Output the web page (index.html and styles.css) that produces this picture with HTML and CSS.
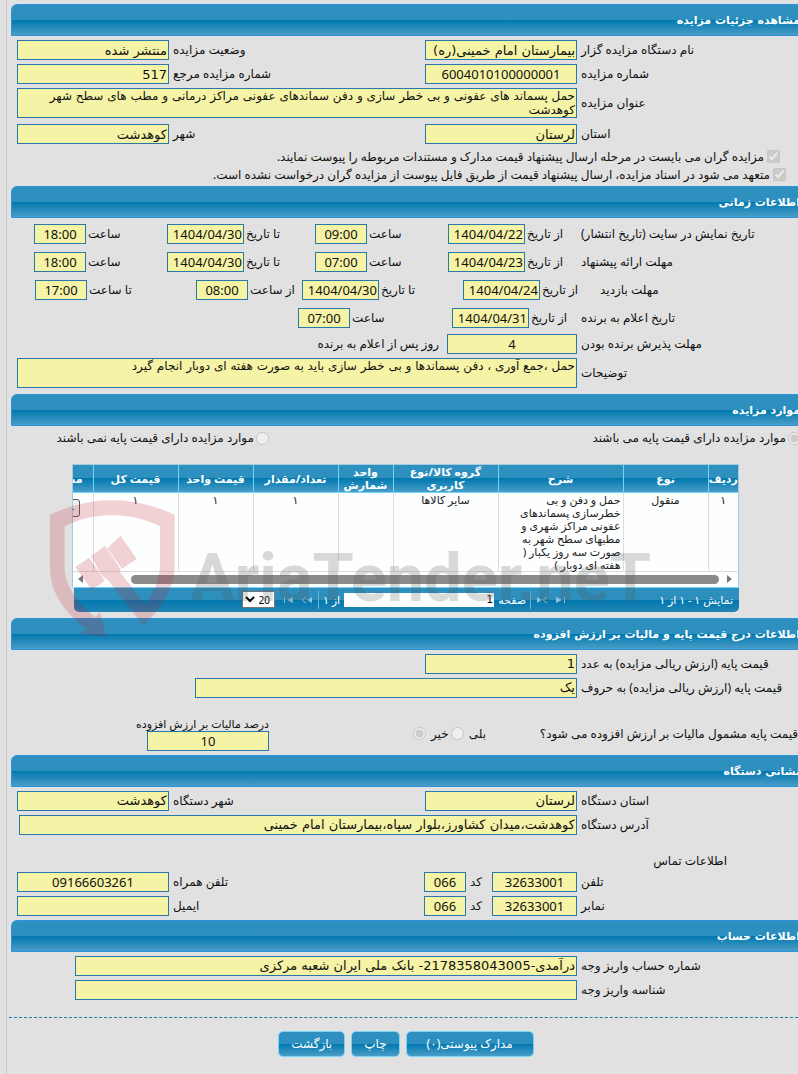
FILE: index.html
```html
<!DOCTYPE html>
<html lang="fa" dir="rtl">
<head>
    <meta charset="UTF-8">
    <meta name="viewport" content="width=device-width, initial-scale=1.0">
    <title>مشاهده جزئیات مزایده</title>
    <link rel="stylesheet" href="styles.css">
</head>
<body>

<main class="page">

    <section>
        <h2 class="bar">مشاهده جزئیات مزایده</h2>
        <div class="rows">
            <div class="row four">
                <label for="org">نام دستگاه مزایده گزار</label>
                <input id="org" type="text" value="بیمارستان امام خمینی(ره)" readonly>
                <label for="status">وضعیت مزایده</label>
                <input id="status" type="text" value="منتشر شده" readonly>
            </div>
            <div class="row four">
                <label for="number">شماره مزایده</label>
                <input id="number" class="center" type="text" value="6004010100000001" readonly>
                <label for="refNumber">شماره مزایده مرجع</label>
                <input id="refNumber" type="text" value="517" readonly>
            </div>
            <div class="row two">
                <label for="title">عنوان مزایده</label>
                <textarea id="title" readonly>حمل پسماند های عفونی و بی خطر سازی و دفن سماندهای عفونی مراکز درمانی و مطب های سطح شهر کوهدشت</textarea>
            </div>
            <div class="row four province">
                <label for="province">استان</label>
                <input id="province" type="text" value="لرستان" readonly>
                <label for="city">شهر</label>
                <input id="city" type="text" value="کوهدشت" readonly>
            </div>
            <div class="checks">
                <label class="check first"><input type="checkbox" checked disabled>مزایده گران می بایست در مرحله ارسال پیشنهاد قیمت مدارک و مستندات مربوطه را پیوست نمایند.</label>
                <label class="check"><input type="checkbox" checked disabled>متعهد می شود در اسناد مزایده، ارسال پیشنهاد قیمت از طریق فایل پیوست از مزایده گران درخواست نشده است.</label>
            </div>
        </div>
    </section>

    <section>
        <h2 class="bar">اطلاعات زمانی</h2>
        <div class="times">
            <div class="time-row">
                <span class="name">تاریخ نمایش در سایت (تاریخ انتشار)</span>
                <label>از تاریخ <input class="date" type="text" value="1404/04/22" readonly></label>
                <label>ساعت <input class="hour" type="text" value="09:00" readonly></label>
                <label>تا تاریخ <input class="date" type="text" value="1404/04/30" readonly></label>
                <label>ساعت <input class="hour" type="text" value="18:00" readonly></label>
            </div>
            <div class="time-row">
                <span class="name">مهلت ارائه پیشنهاد</span>
                <label>از تاریخ <input class="date" type="text" value="1404/04/23" readonly></label>
                <label>ساعت <input class="hour" type="text" value="07:00" readonly></label>
                <label>تا تاریخ <input class="date" type="text" value="1404/04/30" readonly></label>
                <label>ساعت <input class="hour" type="text" value="18:00" readonly></label>
            </div>
            <div class="time-row visit">
                <span class="name">مهلت بازدید</span>
                <label>از تاریخ <input class="date" type="text" value="1404/04/24" readonly></label>
                <label>تا تاریخ <input class="date" type="text" value="1404/04/30" readonly></label>
                <label>از ساعت <input class="hour" type="text" value="08:00" readonly></label>
                <label>تا ساعت <input class="hour" type="text" value="17:00" readonly></label>
            </div>
            <div class="time-row winner">
                <span class="name">تاریخ اعلام به برنده</span>
                <label>از تاریخ <input class="date" type="text" value="1404/04/31" readonly></label>
                <label>ساعت <input class="hour" type="text" value="07:00" readonly></label>
            </div>
        </div>
        <div class="rows flush">
            <div class="row days">
                <label for="days">مهلت پذیرش برنده بودن</label>
                <input id="days" class="center" type="text" value="4" readonly>
                <span>روز پس از اعلام به برنده</span>
            </div>
            <div class="row two">
                <label for="notes">توضیحات</label>
                <textarea id="notes" readonly>حمل ،جمع آوری ، دفن پسماندها و بی خطر سازی باید به صورت هفته ای دوبار انجام گیرد</textarea>
            </div>
        </div>
    </section>

    <section class="items">
        <h2 class="bar">موارد مزایده</h2>
        <div class="base-choice">
            <label><input type="radio" name="base" checked disabled>موارد مزایده دارای قیمت پایه می باشند</label>
            <label><input type="radio" name="base" disabled>موارد مزایده دارای قیمت پایه نمی باشند</label>
        </div>
        <div class="grid">
            <div class="grid-view">
                <table>
                    <colgroup>
                        <col class="c-num"><col class="c-type"><col class="c-desc"><col class="c-group"><col class="c-unit"><col class="c-count"><col class="c-price"><col class="c-total"><col class="c-more">
                    </colgroup>
                    <thead>
                        <tr>
                            <th>ردیف</th>
                            <th>نوع</th>
                            <th>شرح</th>
                            <th>گروه کالا/نوع کاربری</th>
                            <th>واحد شمارش</th>
                            <th>تعداد/مقدار</th>
                            <th>قیمت واحد</th>
                            <th>قیمت کل</th>
                            <th class="cut">مشخصات</th>
                        </tr>
                    </thead>
                    <tbody>
                        <tr>
                            <td>۱</td>
                            <td>منقول</td>
                            <td class="desc">حمل و دفن و بی خطرسازی پسماندهای عفونی مراکز شهری و مطبهای سطح شهر به صورت سه روز یکبار ( هفته ای دوبار )</td>
                            <td>سایر کالاها</td>
                            <td></td>
                            <td>۱</td>
                            <td>۱</td>
                            <td>۱</td>
                            <td class="cut"><button type="button" class="detail">جزئیات</button></td>
                        </tr>
                    </tbody>
                </table>
                <div class="scroll">
                    <i class="arrow next"></i>
                    <div class="thumb"></div>
                    <i class="arrow prev"></i>
                </div>
            </div>
            <div class="pager">
                <span class="info">نمایش ۱ - ۱ از ۱</span>
                <div class="pages">
                    <svg width="10" height="8" viewBox="0 0 10 8"><path d="M0 1l6 3-6 3zM8 1h1v6H8z"/></svg>
                    <svg width="11" height="8" viewBox="0 0 11 8"><path d="M0 1l5 3-5 3z"/><path class="line" d="M10 1L6 4l4 3"/></svg>
                    <i class="sep"></i>
                    <label for="pageNo">صفحه</label>
                    <input id="pageNo" class="page-no" type="text" value="1">
                    <span>از ۱</span>
                    <i class="sep"></i>
                    <svg width="11" height="8" viewBox="0 0 11 8"><path d="M11 1L6 4l5 3z"/><path class="line" d="M5 1L1 4l4 3"/></svg>
                    <svg width="10" height="8" viewBox="0 0 10 8"><path d="M10 1L4 4l6 3zM1 1h1v6H1z"/></svg>
                    <select aria-label="تعداد در صفحه">
                        <option>20</option>
                        <option>50</option>
                    </select>
                </div>
            </div>
        </div>
        <svg class="watermark" width="600" height="138" viewBox="60 60 1800 414" aria-hidden="true">
            <g class="shield">
                <path d="M60 104Q245 18 434 104V250C434 330 395 385 340 437L232 298Q224 296 214 284L183 228L225 198L272 268Q268 274 270 276L344 372Q390 318 390 250V138Q245 72 104 138V262C104 320 145 370 195 412L210 397L230 471L152 462L166 446C110 400 60 345 60 262Z"/>
                <path d="M136 260L178 233L224 302L185 330Z"/>
                <path d="M232 205L272 167L320 237L276 266Z"/>
            </g>
            <text class="brand" x="480" y="362" direction="ltr">AriaTender.neT</text>
        </svg>
    </section>

    <section>
        <h2 class="bar">اطلاعات درج قیمت پایه و مالیات بر ارزش افزوده</h2>
        <div class="rows">
            <div class="row four">
                <label for="price">قیمت پایه (ارزش ریالی مزایده) به عدد</label>
                <input id="price" type="text" value="1" readonly>
            </div>
            <div class="row words">
                <label for="priceWords">قیمت پایه (ارزش ریالی مزایده) به حروف</label>
                <input id="priceWords" type="text" value="یک" readonly>
            </div>
        </div>
        <div class="tax">
            <span class="question">قیمت پایه مشمول مالیات بر ارزش افزوده می شود؟</span>
            <div class="answers">
                <label>بلی <input type="radio" name="tax" disabled></label>
                <label>خیر <input type="radio" name="tax" checked disabled></label>
            </div>
            <div class="percent">
                <label for="percent">درصد مالیات بر ارزش افزوده</label>
                <input id="percent" class="center" type="text" value="10" readonly>
            </div>
        </div>
    </section>

    <section>
        <h2 class="bar">نشانی دستگاه</h2>
        <div class="rows">
            <div class="row four">
                <label for="orgProvince">استان دستگاه</label>
                <input id="orgProvince" type="text" value="لرستان" readonly>
                <label for="orgCity">شهر دستگاه</label>
                <input id="orgCity" type="text" value="کوهدشت" readonly>
            </div>
            <div class="row two address">
                <label for="address">آدرس دستگاه</label>
                <input id="address" type="text" value="کوهدشت،میدان کشاورز،بلوار سپاه،بیمارستان امام خمینی" readonly>
            </div>
            <h3 class="contact">اطلاعات تماس</h3>
            <div class="row phone">
                <label for="tel">تلفن</label>
                <input id="tel" class="center" type="text" value="32633001" readonly>
                <label for="telCode">کد</label>
                <input id="telCode" class="center" type="text" value="066" readonly>
                <label for="mobile">تلفن همراه</label>
                <input id="mobile" class="center" type="text" value="09166603261" readonly>
            </div>
            <div class="row phone">
                <label for="fax">نمابر</label>
                <input id="fax" class="center" type="text" value="32633001" readonly>
                <label for="faxCode">کد</label>
                <input id="faxCode" class="center" type="text" value="066" readonly>
                <label for="email">ایمیل</label>
                <input id="email" type="text" value="" readonly>
            </div>
        </div>
    </section>

    <section>
        <h2 class="bar">اطلاعات حساب</h2>
        <div class="rows">
            <div class="row account">
                <label for="account">شماره حساب واریز وجه</label>
                <input id="account" type="text" value="درآمدی-2178358043005- بانک ملی ایران شعبه مرکزی" readonly>
            </div>
            <div class="row account">
                <label for="payId">شناسه واریز وجه</label>
                <input id="payId" type="text" value="" readonly>
            </div>
        </div>
    </section>

    <div class="actions">
        <button type="button" class="wide">مدارک پیوستی(۰)</button>
        <button type="button">چاپ</button>
        <button type="button">بازگشت</button>
    </div>

</main>

</body>
</html>
```
FILE: styles.css
```css
* {
    box-sizing: border-box;
}

body {
    margin: 0;
    background-color: #e1e1e1;
    color: #111;
    font-family: "Noto Sans", "DejaVu Sans", sans-serif;
    font-size: 12px;
    line-height: 14px;
}

.page {
    margin-left: 6px;
    padding-top: 4px;
    min-height: 100vh;
    border-left: 1px solid #c8c8c8;
    overflow: hidden;
}

/* section title bars */
.bar {
    height: 32px;
    margin: 0 -5px 0 4px;
    padding: 0 2px;
    border: 1px solid #2e93dd;
    border-radius: 6px 6px 0 0;
    background: linear-gradient(#2f90bf 0, #2d8fbe 50%, #0078ae 50%, #4a9dc8 100%);
    color: #fff;
    font-family: "DejaVu Sans", sans-serif;
    font-size: 11px;
    font-weight: bold;
    line-height: 32px;
}

/* form rows */
.rows {
    display: flex;
    flex-direction: column;
    gap: 4px;
    padding: 4px 0 4px 10px;
}

.rows.flush {
    padding-top: 0;
    padding-bottom: 6px;
}

.row {
    display: grid;
    column-gap: 4px;
    align-items: center;
}

.row label {
    text-align: left;
    white-space: nowrap;
}

.four {
    grid-template-columns: 217px 152px 1fr 152px;
}

.two {
    grid-template-columns: 217px 1fr;
}

.province {
    margin-top: 2px;
}

input[type="text"],
textarea {
    width: 100%;
    height: 20px;
    margin: 0;
    padding: 0 1px;
    border: 1px solid #2779aa;
    border-radius: 0;
    background-color: #f5f3a5;
    color: #111;
    font-family: "DejaVu Sans", sans-serif;
    font-size: 13px;
    outline: none;
}

textarea {
    display: block;
    height: 30px;
    font-size: 12px;
    line-height: 14px;
    resize: none;
    overflow: hidden;
}

input.center,
input.date,
input.hour {
    font-family: "Noto Sans", sans-serif;
    text-align: center;
}

input[type="checkbox"],
input[type="radio"] {
    flex: none;
    width: 13px;
    height: 13px;
    margin: 0;
}

.checks {
    display: flex;
    flex-direction: column;
    gap: 4px;
    padding: 2px 12px 0 0;
}

.check {
    display: flex;
    gap: 3px;
    white-space: nowrap;
}

.check.first {
    padding-right: 6px;
}

/* dates and hours */
.times {
    display: flex;
    flex-direction: column;
    gap: 8px;
    padding: 6px 0;
}

.time-row {
    display: grid;
    grid-template-columns: 217px 133px 133px 148px 133px 1fr;
    align-items: center;
    white-space: nowrap;
}

.time-row.visit {
    grid-template-columns: 198px 137px 161px 106px 161px 1fr;
}

.time-row.winner {
    grid-template-columns: 217px 129px 154px 1fr;
}

.time-row .name {
    text-align: left;
}

.time-row label {
    display: flex;
    align-items: center;
    justify-content: flex-end;
    gap: 2px;
}

.time-row .date {
    width: 77px;
    text-align: right;
}

.time-row .hour {
    width: 52px;
}

.days {
    grid-template-columns: 217px 130px 1fr;
}

.days span {
    padding-right: 4px;
}

/* items grid */
.items {
    position: relative;
}

.base-choice {
    display: grid;
    grid-template-columns: 532px 1fr;
    margin-right: -3px;
    padding: 5px 0 19px;
}

.base-choice label {
    display: flex;
    align-items: center;
    gap: 2px;
    white-space: nowrap;
}

.grid {
    margin: 0 59px 6px 65px;
}

.grid-view {
    overflow: hidden;
    border: 1px solid #a6c9e2;
    border-bottom: none;
    background-color: #fdfefe;
}

.grid table {
    width: 760px;
    table-layout: fixed;
    border-collapse: collapse;
}

.c-num { width: 30px; }
.c-type { width: 85px; }
.c-desc { width: 125px; }
.c-group { width: 105px; }
.c-unit { width: 55px; }
.c-count { width: 85px; }
.c-price { width: 75px; }
.c-total { width: 85px; }

.grid th {
    height: 27px;
    padding: 0;
    border-left: 1px solid #77d5f7;
    border-bottom: 1px solid #77d5f7;
    background: linear-gradient(#2f90bf 0, #2d8fbe 50%, #0078ae 50%, #4a9dc8 100%);
    color: #fff;
    font-size: 11px;
    line-height: 13px;
}

.grid td {
    height: 79px;
    padding: 0 2px;
    border-left: 1px solid #ddd;
    border-bottom: 1px solid #ddd;
    color: #222;
    font-size: 11px;
    line-height: 13px;
    text-align: center;
    vertical-align: top;
}

.grid td.desc {
    text-align: right;
}

.grid .cut {
    padding-right: 10px;
    text-align: right;
}

.grid td.cut {
    padding: 6px 13px 0 0;
}

.detail {
    height: 18px;
    padding: 0 4px;
    border: 1px solid #555;
    border-radius: 3px;
    background-color: #efefef;
    font-family: inherit;
    font-size: 11px;
}

.scroll {
    display: flex;
    align-items: center;
    height: 15px;
    padding: 0 6px 0 5px;
}

.thumb {
    flex: 1;
    height: 9px;
    margin: 0 8px 0 48px;
    border-radius: 5px;
    background-color: #8b8b8b;
}

.arrow {
    border: 4px solid transparent;
}

.arrow.next {
    border-left: 5px solid #777;
    border-right: none;
}

.arrow.prev {
    border-right: 5px solid #777;
    border-left: none;
}

.pager {
    display: flex;
    align-items: center;
    justify-content: space-between;
    height: 25px;
    margin-left: 2px;
    padding: 0 6px 0 168px;
    border-top: 1px solid #77d5f7;
    border-radius: 0 0 5px 5px;
    background: linear-gradient(#2f90bf 0, #2d8fbe 50%, #0078ae 50%, #2384b5 100%);
    color: #fff;
    font-size: 11px;
    white-space: nowrap;
}

.pages {
    display: flex;
    align-items: center;
    gap: 4px;
}

.pages svg {
    margin: 0 2px;
    fill: #8cc4e0;
}

.pages .line {
    fill: none;
    stroke: #8cc4e0;
}

.sep {
    width: 1px;
    height: 18px;
    background-color: #6db5d8;
}

.pages input.page-no {
    width: 150px;
    height: 14px;
    border: none;
    background-color: #fff;
    font-size: 11px;
}

.pages select {
    width: 33px;
    height: 17px;
    margin-right: 2px;
    padding: 0;
    border: 1px solid #767676;
    border-radius: 0;
    background-color: #fff;
    font-family: inherit;
    font-size: 10px;
}

.watermark {
    position: absolute;
    top: 106px;
    left: 43px;
    pointer-events: none;
}

.shield {
    fill: rgba(190, 30, 45, 0.2);
}

.brand {
    fill: rgba(80, 85, 85, 0.22);
    font-family: Roboto, "Liberation Sans", sans-serif;
    font-size: 200px;
    font-weight: bold;
}

/* price and tax */
.words {
    grid-template-columns: 217px 382px 1fr;
}

.tax {
    display: grid;
    grid-template-columns: 251px 134px 1fr;
    align-items: center;
    padding: 15px 0 4px;
    white-space: nowrap;
}

.question {
    text-align: left;
}

.answers {
    display: flex;
    justify-content: flex-end;
    gap: 2px;
}

.answers label {
    display: flex;
    align-items: center;
    gap: 5px;
}

.percent {
    display: flex;
    flex-direction: column;
    align-items: flex-start;
    padding-right: 144px;
    font-size: 11px;
}

.percent input[type="text"] {
    width: 122px;
}

/* address and contact */
.address {
    padding-left: 2px;
}

.contact {
    margin: 15px 71px 0 0;
    font-size: 12px;
    font-weight: normal;
}

.phone {
    grid-template-columns: 217px 85px 18px 42px 1fr 152px;
}

.account {
    grid-template-columns: 217px 1fr;
    padding-left: 58px;
}

/* footer buttons */
.actions {
    display: flex;
    justify-content: center;
    gap: 6px;
    margin: 13px -5px 0 2px;
    padding: 13px 0 18px;
    border-top: 1px dashed #2779aa;
}

.actions button {
    height: 26px;
    padding: 0 12px;
    border: 1px solid #77d5f7;
    border-radius: 5px;
    background: linear-gradient(#2f90bf 0, #2d8fbe 50%, #0078ae 50%, #4a9dc8 100%);
    color: #fff;
    font-family: inherit;
    font-size: 12px;
    cursor: pointer;
}

.actions .wide {
    padding: 0 20px;
}
```
